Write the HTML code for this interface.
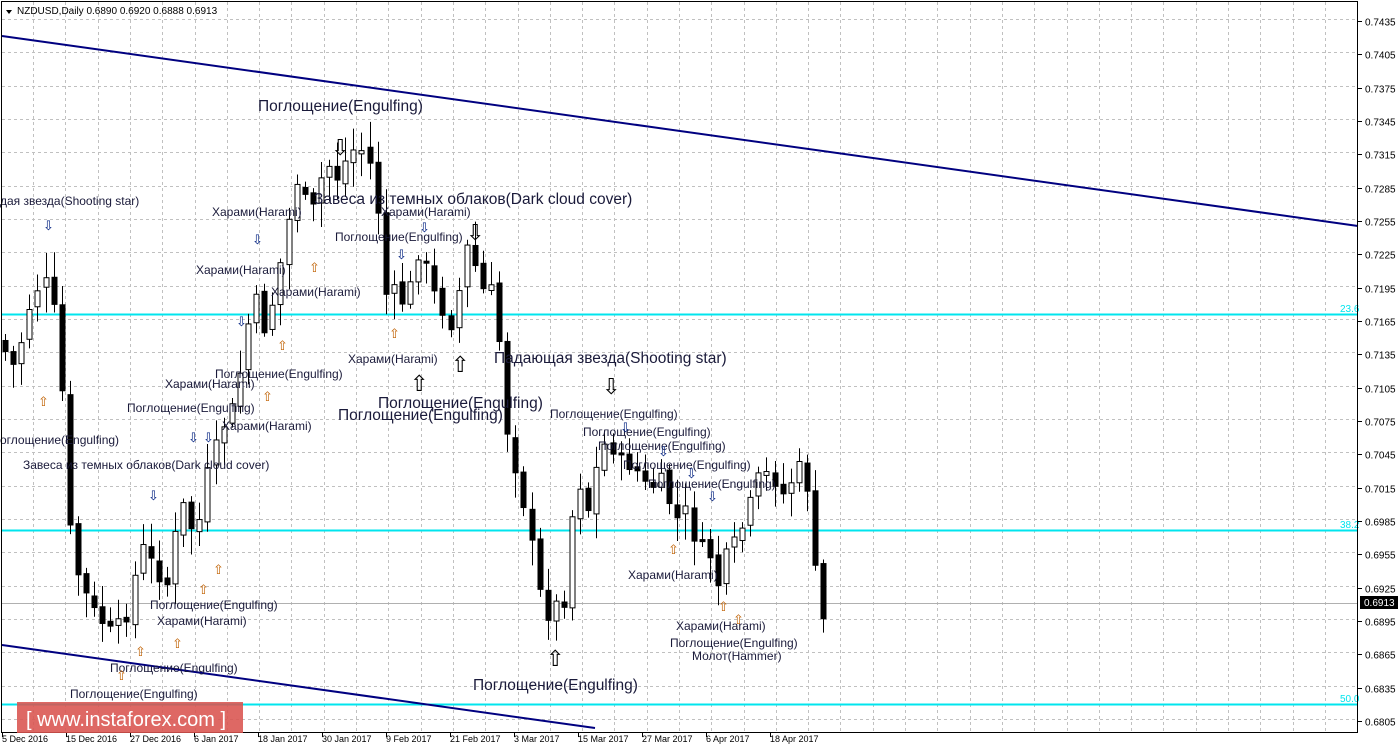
<!DOCTYPE html>
<html><head><meta charset="utf-8">
<style>
html,body{margin:0;padding:0;background:#fff;width:1398px;height:749px;overflow:hidden;font-family:"Liberation Sans",Arial,sans-serif}
svg{display:block}
</style></head><body>
<svg id="s" width="1398" height="749" xmlns="http://www.w3.org/2000/svg" font-family="Liberation Sans, Arial, sans-serif">
<rect x="0" y="0" width="1398" height="749" fill="#fff"/>
<g id="grid" stroke="#c0c0c0" stroke-dasharray="3,3" stroke-width="1"></g>
<line x1="2" y1="603.5" x2="1358" y2="603.5" stroke="#b0b0b0"/>
<line x1="2" y1="314.5" x2="1358" y2="314.5" stroke="#00e5ee" stroke-width="2"/>
<line x1="2" y1="530.5" x2="1358" y2="530.5" stroke="#00e5ee" stroke-width="2"/>
<line x1="2" y1="704.5" x2="1358" y2="704.5" stroke="#00e5ee" stroke-width="2"/>
<g font-size="10" fill="#00e5ee"><text x="1340" y="312">23.6</text><text x="1340" y="528">38.2</text><text x="1340" y="702">50.0</text></g>
<line x1="2" y1="36" x2="1358" y2="226" stroke="#000080" stroke-width="2"/>
<line x1="2" y1="645" x2="595" y2="728" stroke="#000080" stroke-width="2"/>
<g id="candles"></g>
<g id="labels" fill="#1a1a3a"></g>
<rect x="1.5" y="1.5" width="1356" height="731" fill="none" stroke="#000"/>
<g id="axis" font-size="10" fill="#000"></g>
<rect x="1360" y="596" width="38" height="13" fill="#000"/>
<text x="1364" y="606" font-size="10" fill="#fff">0.6913</text>
<path d="M6 10 L12 10 L9 14 Z" fill="#000"/>
<text x="17" y="14" font-size="10" fill="#000">NZDUSD,Daily  0.6890 0.6920 0.6888 0.6913</text>
<rect x="17" y="702" width="226" height="31" fill="#d9534f" opacity="0.88"/>
<text x="26" y="726" font-size="20" fill="#fff">[ www.instaforex.com ]</text>
</svg>
<script>
(function(){
var NS="http://www.w3.org/2000/svg";
function el(p,t,a,txt){var e=document.createElementNS(NS,t);for(var k in a)e.setAttribute(k,a[k]);if(txt)e.textContent=txt;p.appendChild(e);return e;}
var g=document.getElementById('grid'),ax=document.getElementById('axis');
var prices=["0.7435","0.7405","0.7375","0.7345","0.7315","0.7285","0.7255","0.7225","0.7195","0.7165","0.7135","0.7105","0.7075","0.7045","0.7015","0.6985","0.6955","0.6925","0.6895","0.6865","0.6835","0.6805"];
for(var i=0;i<prices.length;i++){var yy=Math.round(21+i*33.33)+0.5;el(g,'line',{x1:2,y1:yy-2,x2:1358,y2:yy-2});el(ax,'line',{x1:1358,y1:yy,x2:1362,y2:yy,stroke:'#000'});el(ax,'text',{x:1365,y:yy+4},prices[i]);}
for(var gx=33;gx<1358;gx+=32.3){var xx=Math.round(gx)+0.5;el(g,'line',{x1:xx,y1:2,x2:xx,y2:733});}
var dates=[[2,"5 Dec 2016"],[66,"15 Dec 2016"],[130,"27 Dec 2016"],[194,"6 Jan 2017"],[258,"18 Jan 2017"],[322,"30 Jan 2017"],[386,"9 Feb 2017"],[450,"21 Feb 2017"],[514,"3 Mar 2017"],[578,"15 Mar 2017"],[642,"27 Mar 2017"],[706,"6 Apr 2017"],[770,"18 Apr 2017"]];
dates.forEach(function(d){el(ax,'text',{x:d[0],y:742,'font-size':9},d[1]);el(ax,'line',{x1:d[0]+0.5,y1:733,x2:d[0]+0.5,y2:737,stroke:'#000'});});
var wp=[[2,340],[20,370],[30,315],[45,280],[55,285],[65,380],[75,550],[85,585],[100,615],[115,632],[130,618],[145,545],[160,570],[170,590],[185,500],[200,540],[212,470],[225,430],[240,400],[250,330],[260,300],[270,335],[285,260],[300,180],[315,215],[330,160],[340,180],[355,150],[370,150],[380,190],[388,295],[400,290],[410,310],[420,250],[432,270],[440,300],[455,325],[465,280],[472,240],[485,290],[498,290],[505,360],[512,440],[520,470],[530,515],[540,570],[548,620],[558,605],[570,600],[580,460],[590,520],[600,470],[610,440],[625,460],[640,470],[652,490],[665,480],[680,520],[690,510],[700,545],[712,550],[722,585],[732,548],[742,540],[752,510],[765,470],[778,480],[790,500],[800,460],[812,490],[818,560],[824,625],[840,600]];
function yAt(x){for(var i=1;i<wp.length;i++){if(x<=wp[i][0]){var a=wp[i-1],b=wp[i];return a[1]+(b[1]-a[1])*(x-a[0])/(b[0]-a[0]);}}return wp[wp.length-1][1];}
var c=document.getElementById('candles');var seed=7;function rnd(){seed=(seed*9301+49297)%233280;return seed/233280;}
var prev=yAt(2);
for(var cx0=5;cx0<=828;cx0+=8.1){var cl=yAt(cx0+4)+(rnd()-0.5)*14;var op=prev+(rnd()-0.5)*8;var tp=Math.min(op,cl),bt=Math.max(op,cl);if(bt-tp<2){bt=tp+2;}
var hi=tp-4-rnd()*22,lo=bt+4+rnd()*22;var cx=Math.round(cx0)+0.5;
el(c,'line',{x1:cx,y1:hi,x2:cx,y2:lo,stroke:'#000'});
var bull=cl<op;el(c,'rect',{x:cx-2.5,y:tp,width:5,height:bt-tp,fill:bull?'#fff':'#000',stroke:'#000'});prev=cl;}
var L=document.getElementById('labels');
var sm=[[0,205,"дая звезда(Shooting star)"],[212,216,"Харами(Harami)"],[196,274,"Харами(Harami)"],[271,296,"Харами(Harami)"],[381,216,"Харами(Harami)"],[335,241,"Поглощение(Engulfing)"],[165,388,"Харами(Harami)"],[215,378,"Поглощение(Engulfing)"],[127,412,"Поглощение(Engulfing)"],[222,430,"Харами(Harami)"],[0,444,"оглощение(Engulfing)"],[23,469,"Завеса из темных облаков(Dark cloud cover)"],[348,363,"Харами(Harami)"],[150,609,"Поглощение(Engulfing)"],[157,625,"Харами(Harami)"],[110,672,"Поглощение(Engulfing)"],[70,698,"Поглощение(Engulfing)"],[550,418,"Поглощение(Engulfing)"],[583,436,"Поглощение(Engulfing)"],[598,450,"Поглощение(Engulfing)"],[623,469,"Поглощение(Engulfing)"],[648,488,"Поглощение(Engulfing)"],[628,579,"Харами(Harami)"],[676,630,"Харами(Harami)"],[670,647,"Поглощение(Engulfing)"],[692,660,"Молот(Hammer)"]];
sm.forEach(function(s){el(L,'text',{x:s[0],y:s[1],'font-size':12},s[2]);});
var lg=[[258,111,"Поглощение(Engulfing)"],[314,204,"Завеса из темных облаков(Dark cloud cover)"],[494,363,"Падающая звезда(Shooting star)"],[378,408,"Поглощение(Engulfing)"],[338,420,"Поглощение(Engulfing)"],[473,690,"Поглощение(Engulfing)"]];
lg.forEach(function(s){el(L,'text',{x:s[0],y:s[1],'font-size':15.5},s[2]);});
var bigA=[[331,155,"⇩"],[602,394,"⇩"],[410,391,"⇧"],[451,372,"⇧"],[546,666,"⇧"],[466,240,"⇩"]];
bigA.forEach(function(a){el(L,'text',{x:a[0],y:a[1],'font-size':22,fill:'#000'},a[2]);});
var up=[[38,406],[309,272],[277,350],[262,401],[389,338],[172,648],[135,656],[198,594],[213,574],[668,554],[718,611],[733,624],[116,680]];
up.forEach(function(a){el(L,'text',{x:a[0],y:a[1],'font-size':13,fill:'#c06000'},"⇧");});
var dn=[[43,230],[252,244],[236,326],[188,442],[203,442],[148,500],[396,259],[419,232],[707,501],[686,478],[620,432],[658,456]];
dn.forEach(function(a){el(L,'text',{x:a[0],y:a[1],'font-size':13,fill:'#002080'},"⇩");});
})();
</script>
</body></html>
